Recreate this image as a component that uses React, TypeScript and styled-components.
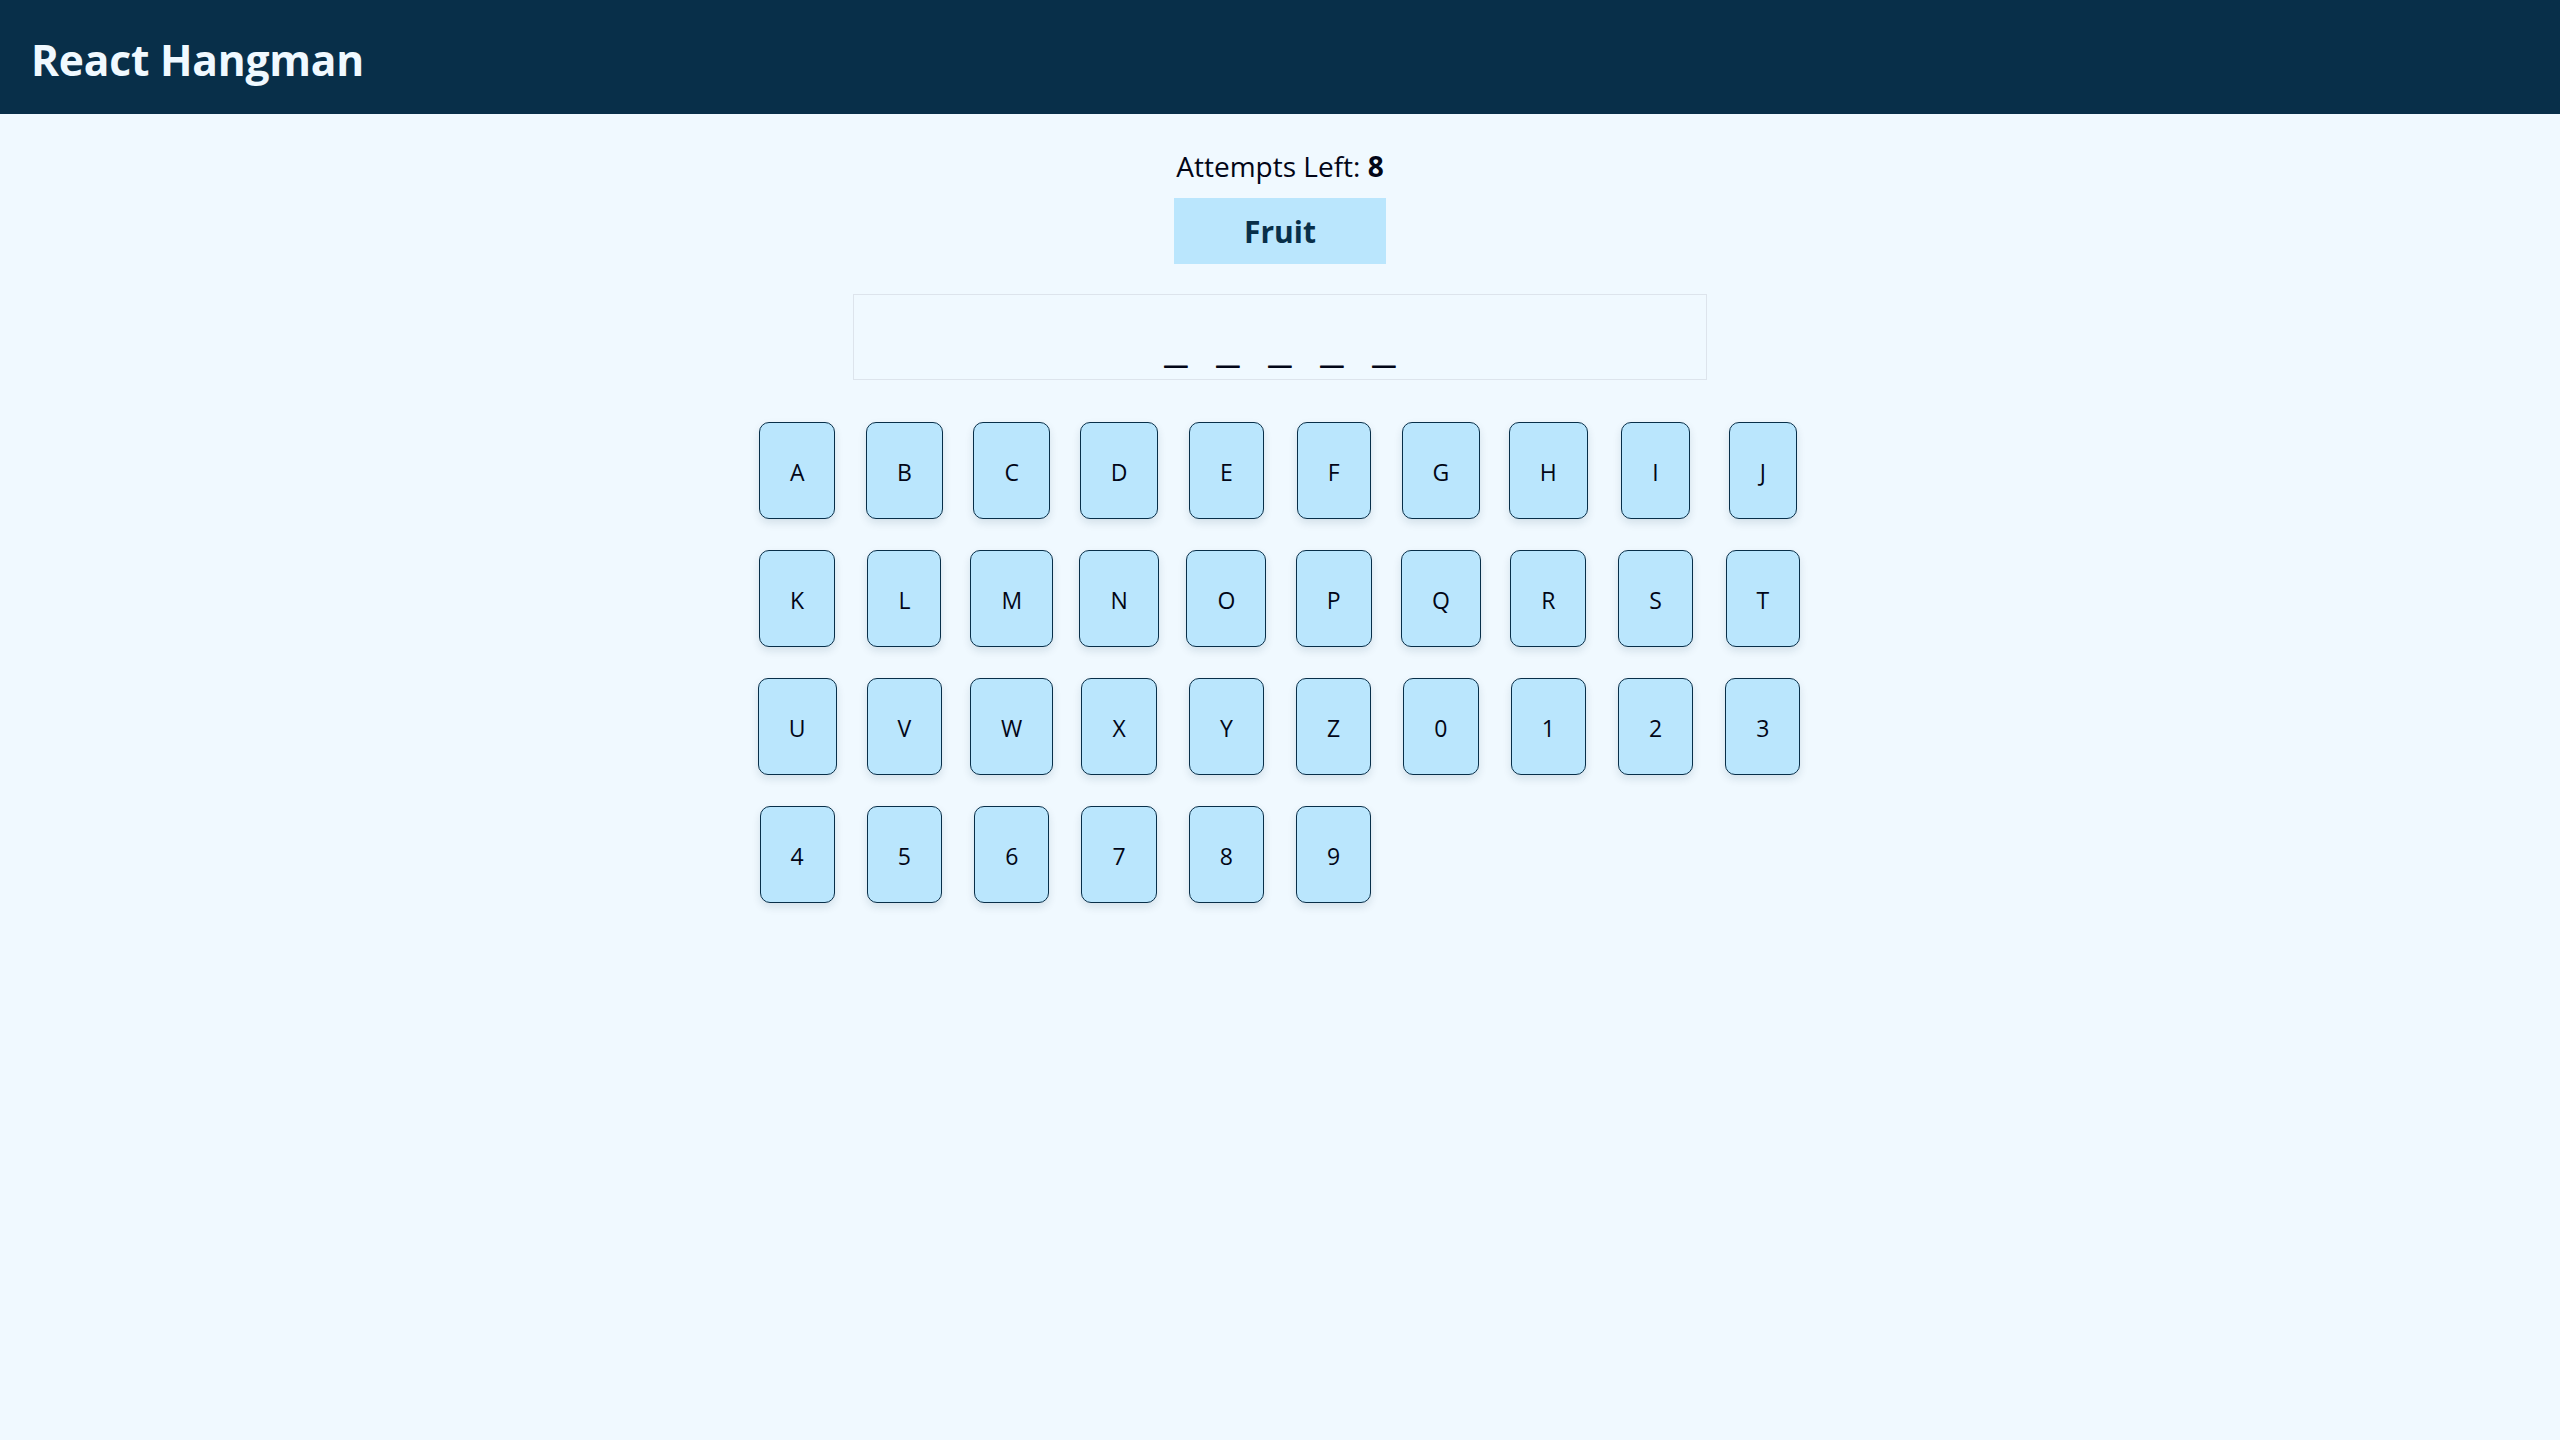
import React from "react";
import styled, { createGlobalStyle } from "styled-components";

const GlobalStyle = createGlobalStyle`
  html, body {
    margin: 0;
    padding: 0;
    background: #f0f9ff;
    font-family: "Open Sans", "Noto Sans", sans-serif;
    color: #020617;
  }
  * { box-sizing: border-box; }
`;

const Page = styled.div`
  min-height: 1440px;
  background: #f0f9ff;
`;

const Header = styled.header`
  height: 114px;
  background: #082f49;
  display: flex;
  align-items: center;
  padding: 0 31px;
`;

const Title = styled.h1`
  margin: 0;
  padding-top: 7px;
  font-size: 42.5px;
  font-weight: 700;
  line-height: 1;
  color: #f0f9ff;
  letter-spacing: -0.2px;
`;

const Main = styled.main`
  display: flex;
  flex-direction: column;
  align-items: center;
  padding-top: 35px;
`;

const Status = styled.div`
  display: flex;
  flex-direction: column;
  align-items: center;
`;

const Attempts = styled.p`
  margin: 0;
  font-size: 28px;
  line-height: 34px;
  color: #020617;

  strong {
    font-weight: 700;
  }
`;

const Category = styled.div`
  margin-top: 15px;
  width: 212px;
  height: 66px;
  background: #bae6fd;
  color: #082f49;
  font-size: 30px;
  font-weight: 700;
  display: flex;
  align-items: center;
  justify-content: center;
`;

const WordBox = styled.div`
  margin-top: 30px;
  width: 854px;
  height: 86px;
  border: 1px solid #dde4ec;
  display: flex;
  justify-content: center;
  align-items: flex-end;
  gap: 29px;
  padding-bottom: 10px;
`;

const Slot = styled.span`
  display: inline-block;
  width: 23px;
  font-family: "Liberation Sans", Arial, sans-serif;
  font-size: 41px;
  font-weight: 700;
  line-height: 41px;
  text-align: center;
  color: #020617;
  text-shadow: 0 1px 0 #020617;
`;

const Keyboard = styled.div`
  margin-top: 42px;
  width: 1073px;
  display: grid;
  grid-template-columns: repeat(10, 1fr);
  grid-auto-rows: 97px;
  row-gap: 31px;
  justify-items: center;
`;

const Key = styled.button`
  height: 97px;
  padding: 3px 30px 0;
  border: 1px solid #082f49;
  border-radius: 10px;
  background: #bae6fd;
  color: #020617;
  font-family: "Open Sans", "Noto Sans", sans-serif;
  font-size: 23px;
  line-height: 1;
  cursor: pointer;
  box-shadow: 0 4px 8px rgba(8, 47, 73, 0.12);
  display: flex;
  align-items: center;
  justify-content: center;
`;

const keys = "ABCDEFGHIJKLMNOPQRSTUVWXYZ0123456789".split("");
const word = "APPLE";

export default function App() {
  return (
    <Page>
      <GlobalStyle />
      <Header>
        <Title>React Hangman</Title>
      </Header>
      <Main>
        <Status>
          <Attempts>
            Attempts Left: <strong>8</strong>
          </Attempts>
          <Category>Fruit</Category>
        </Status>
        <WordBox>
          {word.split("").map((_, i) => (
            <Slot key={i}>_</Slot>
          ))}
        </WordBox>
        <Keyboard>
          {keys.map((k) => (
            <Key key={k} type="button">
              {k}
            </Key>
          ))}
        </Keyboard>
      </Main>
    </Page>
  );
}
